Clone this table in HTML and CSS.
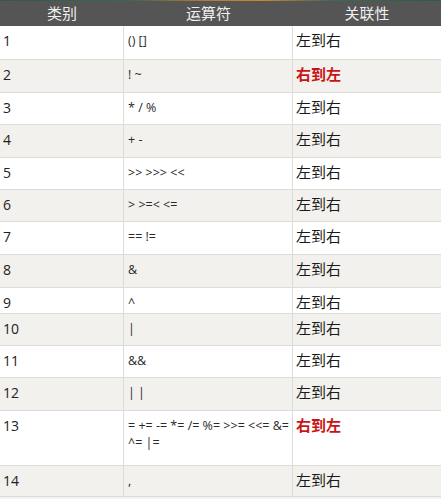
FILE: index.html
```html
<!DOCTYPE html>
<html lang="zh">
<head>
<meta charset="utf-8">
<link rel="stylesheet" href="styles.css">
</head>
<body>
<div class="table">
  <div class="strip"></div>
  <div class="row head">
    <div class="cell">类别</div>
    <div class="cell">运算符</div>
    <div class="cell">关联性</div>
  </div>
  <div class="row r34"><div class="cell num">1</div><div class="cell op">() []</div><div class="cell assoc">左到右</div></div>
  <div class="row alt"><div class="cell num">2</div><div class="cell op">! ~</div><div class="cell assoc red">右到左</div></div>
  <div class="row r32"><div class="cell num">3</div><div class="cell op">* / %</div><div class="cell assoc">左到右</div></div>
  <div class="row alt"><div class="cell num">4</div><div class="cell op">+ -</div><div class="cell assoc">左到右</div></div>
  <div class="row r32"><div class="cell num">5</div><div class="cell op">&gt;&gt; &gt;&gt;&gt; &lt;&lt;</div><div class="cell assoc">左到右</div></div>
  <div class="row alt r32"><div class="cell num">6</div><div class="cell op">&gt; &gt;=&lt; &lt;=</div><div class="cell assoc">左到右</div></div>
  <div class="row"><div class="cell num">7</div><div class="cell op">== !=</div><div class="cell assoc">左到右</div></div>
  <div class="row alt"><div class="cell num">8</div><div class="cell op">&amp;</div><div class="cell assoc">左到右</div></div>
  <div class="row r26"><div class="cell num">9</div><div class="cell op">^</div><div class="cell assoc">左到右</div></div>
  <div class="row alt r32"><div class="cell num">10</div><div class="cell op">|</div><div class="cell assoc">左到右</div></div>
  <div class="row r32"><div class="cell num">11</div><div class="cell op">&amp;&amp;</div><div class="cell assoc">左到右</div></div>
  <div class="row alt"><div class="cell num">12</div><div class="cell op">| |</div><div class="cell assoc">左到右</div></div>
  <div class="row r55"><div class="cell num">13</div><div class="cell op">= += -= *= /= %= &gt;&gt;= &lt;&lt;= &amp;=<br>^= |=</div><div class="cell assoc red">右到左</div></div>
  <div class="row alt r31"><div class="cell num">14</div><div class="cell op">,</div><div class="cell assoc">左到右</div></div>
</div>
</body>
</html>
```
FILE: styles.css
```css
html, body {
  margin: 0;
  padding: 0;
  background: #f4f3f0;
}
.table {
  width: 441px;
  font-family: "Open Sans", "Noto Sans CJK SC", sans-serif;
  color: #222;
}
.strip {
  height: 1px;
  background: linear-gradient(90deg, #2e5a4a 0%, #3a6a50 30%, #b07a30 45%, #c8872e 60%, #3b6b55 75%, #2d5a4a 100%);
}
.row {
  display: grid;
  grid-template-columns: 124px 169px 148px;
  height: 33px;
  box-sizing: border-box;
  border-bottom: 1px solid #dcdcd8;
  background: #ffffff;
}
.row.alt { background: #f2f1ed; }
.row.r34 { height: 34px; }
.row.r32 { height: 32px; }
.row.r31 { height: 31px; }
.row.r26 { height: 26px; }
.row.r55 { height: 55px; }
.cell {
  box-sizing: border-box;
  border-right: 1px solid #dcdcd8;
  padding: 6px 3px 0;
  line-height: 17px;
  overflow: hidden;
  white-space: nowrap;
}
.cell:last-child { border-right: none; }
.head {
  height: 25px;
  background: #555555;
  border-bottom: none;
}
.head .cell {
  border-right: none;
  text-align: center;
  color: #f0f0f0;
  font-family: "Noto Sans CJK SC", sans-serif;
  font-size: 15px;
  line-height: 24px;
  padding: 0;
}
.num {
  font-size: 14px;
  color: #222;
}
.op {
  font-size: 12.5px;
  line-height: 17px;
  padding: 6px 0 0 4px;
  color: #2a2a2a;
}
.assoc {
  font-family: "Noto Sans CJK SC", sans-serif;
  font-size: 15px;
  line-height: 18px;
  padding: 5px 0 0 3px;
  color: #1a1a1a;
}
.assoc.red {
  color: #c81414;
  font-weight: 700;
}
```
